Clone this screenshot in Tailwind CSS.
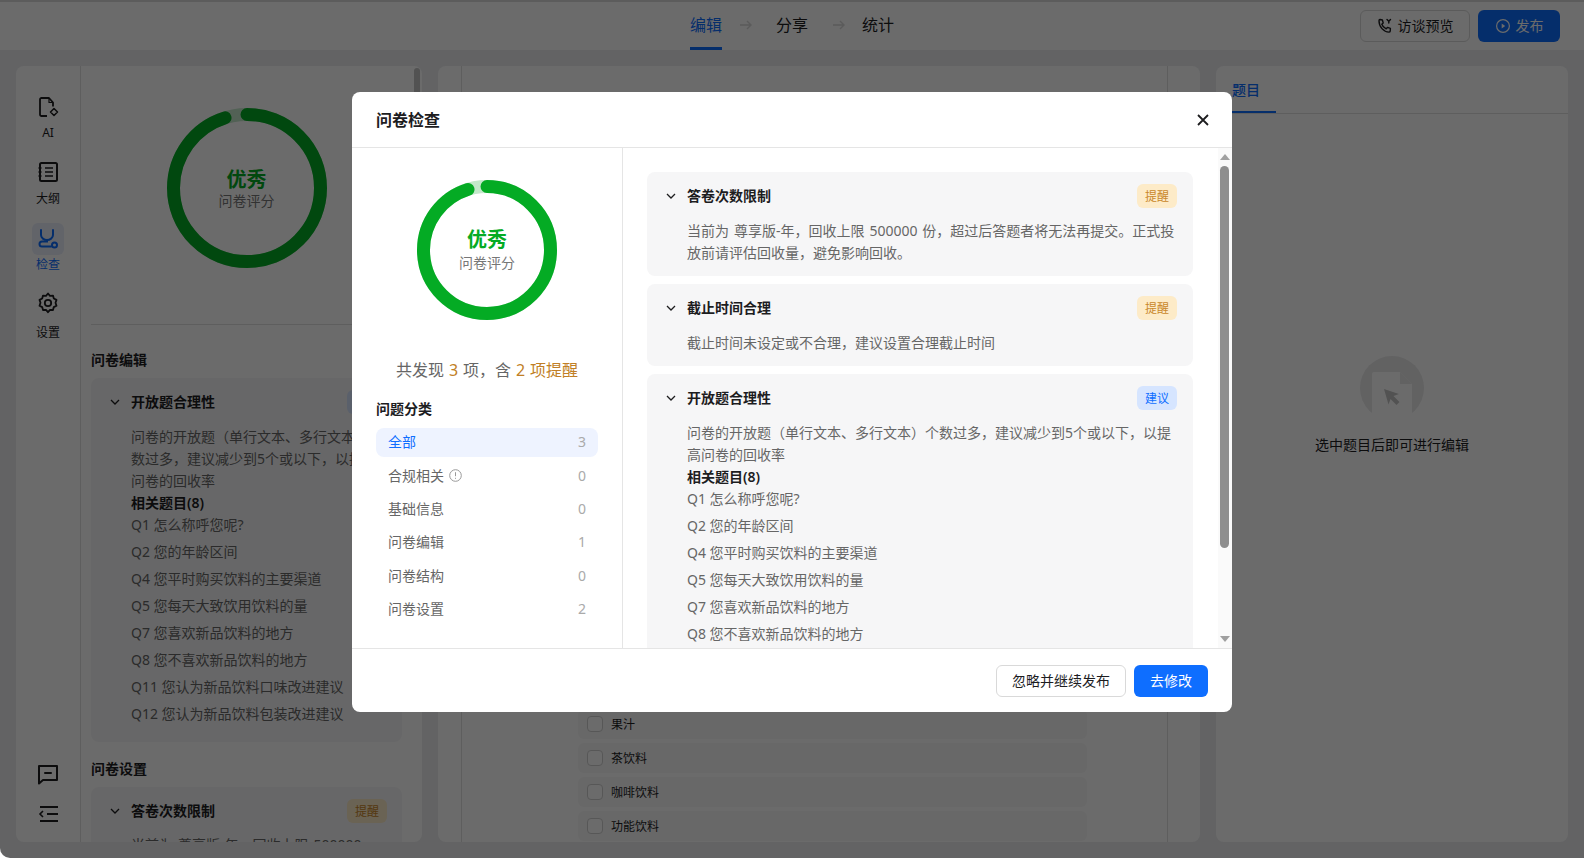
<!DOCTYPE html>
<html lang="zh-CN">
<head>
  <meta charset="UTF-8">
  <meta name="viewport" content="width=device-width, initial-scale=1.0">
  <title>问卷检查</title>
  <script src="https://cdn.jsdelivr.net/npm/@tailwindcss/browser@4"></script>
</head>
<body class="bg-white font-['Noto_Sans','Noto_Sans_CJK_SC',sans-serif] text-[#1d1d1f]">
  <div class="relative w-[1584px] h-[858px] overflow-hidden rounded-bl-[10px] bg-[#ecedef]">

    <!-- top bar -->
    <header class="relative h-[50px] bg-white border-t-2 border-[#dcdcdc] flex items-center justify-end pr-6 gap-2">
      <div class="absolute left-[690px] top-0 h-[46px] flex items-center text-base">
        <span class="relative w-8 text-[#0e6eff] h-full flex items-center">编辑<i class="absolute left-0 right-0 -bottom-[2px] h-[3px] bg-[#0e6eff]"></i></span>
        <svg class="ml-[17px] mr-[23px]" width="14" height="14" viewBox="0 0 14 14" fill="none" stroke="#d8d8d8" stroke-width="1.4"><path d="M1 7h11M8 3l4 4-4 4"/></svg>
        <span class="w-8">分享</span>
        <svg class="ml-[24px] mr-[16px]" width="14" height="14" viewBox="0 0 14 14" fill="none" stroke="#d8d8d8" stroke-width="1.4"><path d="M1 7h11M8 3l4 4-4 4"/></svg>
        <span class="w-8">统计</span>
      </div>
      <button class="h-8 w-[110px] rounded-md border border-[#d9d9d9] flex items-center justify-center gap-[5px] text-sm">
        <svg width="16" height="16" viewBox="0 0 16 16" fill="none" stroke="#1d1d1f" stroke-width="1.4" stroke-linejoin="round" stroke-linecap="round"><path d="M3 1.5 5.4 2l.8 3-1.4 1.2c.7 2 2.2 3.6 4.4 4.6l1.3-1.4 2.9 1-.2 2.7c-.1.6-.6 1-1.2 1C6.600 14 2 8.800 2 2.700c0-.6.400-1.100 1-1.200Z"/><path d="M10 1.500l1.800 1.800M13.500 1.500l-1.700 1.800v1.700"/></svg>
        访谈预览
      </button>
      <button class="h-8 w-[82px] rounded-md bg-[#0e6eff] text-white flex items-center justify-center gap-[5px] text-sm">
        <svg width="16" height="16" viewBox="0 0 16 16" fill="none" stroke="#fff" stroke-width="1.2"><circle cx="8" cy="8" r="6.400"/><path d="M6.700 5.500 10.200 8l-3.500 2.500Z" fill="#fff" stroke="none"/></svg>
        发布
      </button>
    </header>

    <main class="flex gap-4 p-4 h-[808px]">
      <!-- left panel -->
      <section class="relative w-[406px] bg-white rounded-lg flex overflow-hidden">
        <nav class="w-[65px] border-r border-[#e0e0e0] flex flex-col items-center pt-[30px] pb-[17px] text-xs shrink-0">
          <svg width="22" height="22" viewBox="0 0 22 22" fill="none" stroke="#1d1d1f" stroke-width="1.800" stroke-linejoin="round"><path d="M10 20H4.500C3.700 20 3 19.300 3 18.500V3.500C3 2.700 3.700 2 4.500 2h7.500l4 4.500v4"/><path d="M12 2v4.500h4" stroke-width="1.200"/><path d="M17 12.500l3.500 3.500-3.500 3.500-3.500-3.500Z" stroke-width="1.500"/></svg>
          <span class="mt-[7px] leading-4">AI</span>
          <svg class="mt-[20px]" width="22" height="22" viewBox="0 0 22 22" fill="none" stroke="#1d1d1f" stroke-width="2" stroke-linejoin="round"><rect x="3" y="2" width="17" height="18" rx="1.500"/><path d="M8 7h8M8 11h8M8 15h8M1.500 7h3M1.500 11h3M1.500 15h3" stroke-width="1.600"/></svg>
          <span class="mt-[8px] leading-4">大纲</span>
          <div class="mt-[16px] w-8 h-8 rounded-md bg-[#e9eefb] flex items-center justify-center">
            <svg width="22" height="22" viewBox="0 0 22 22" fill="none" stroke="#0e6eff" stroke-width="2" stroke-linecap="round"><path d="M4 2v5c0 3 3 5 6 5s6-2 6-5V2"/><path d="M10 12v1.500H5a2.500 2.500 0 0 0 0 5h9"/><circle cx="17.500" cy="17" r="2.500"/></svg>
          </div>
          <span class="mt-[2px] leading-4 text-[#0e6eff]">检查</span>
          <svg class="mt-[19px]" width="22" height="22" viewBox="0 0 22 22" fill="none" stroke="#1d1d1f" stroke-width="1.800" stroke-linejoin="round"><path d="M11 1.500l2 2.300 3-.2.800 2.900 2.700 1.400-1 2.900 1 2.900-2.700 1.400-.8 2.900-3-.2-2 2.400-2-2.400-3 .2-.8-2.900-2.700-1.400 1-2.900-1-2.900 2.700-1.400.8-2.900 3 .2Z"/><circle cx="11" cy="11" r="3.200"/></svg>
          <span class="mt-[11px] leading-4">设置</span>
          <svg class="mt-auto" width="22" height="22" viewBox="0 0 22 22" fill="none" stroke="#1d1d1f" stroke-width="2" stroke-linejoin="round"><path d="M2 3h18v14H6l-4 3.500Z"/><path d="M8 10h6" stroke-linecap="round"/></svg>
          <svg class="mt-[18px]" width="22" height="22" viewBox="0 0 22 22" fill="none" stroke="#1d1d1f" stroke-width="2"><path d="M3 4h18M10 11h11M3 18h18"/><path d="M6 8l-3 3 3 3" stroke-width="1.600"/></svg>
        </nav>

        <div class="flex-1 pl-[10px] pr-[20px] pt-[42px] overflow-hidden">
          <div class="relative w-[160px] h-[160px] mx-auto">
            <svg width="160" height="160" viewBox="0 0 160 160" fill="none" stroke-width="13" class="-rotate-90">
              <circle cx="80" cy="80" r="73.500" stroke="#c3e8ca"/>
              <circle cx="80" cy="80" r="73.500" stroke="#04ab24" stroke-linecap="round" stroke-dasharray="438.700 461.800"/>
            </svg>
            <div class="absolute inset-0 flex flex-col items-center justify-center pt-[5px]">
              <span class="text-xl leading-5 font-bold text-[#04ab24]">优秀</span>
              <span class="text-sm leading-[22px] text-[#777]">问卷评分</span>
            </div>
          </div>
          <div class="mt-[56px] border-t border-[#e0e0e0]"></div>
          <h3 class="mt-[24px] text-sm leading-[22px] font-semibold">问卷编辑</h3>
          <div class="mt-[7px] w-[311px] bg-[#f6f6f7] rounded-lg pl-[40px] pr-[15px] pt-3 pb-[17px]">
            <div class="relative h-6 flex items-center justify-between">
              <svg class="absolute left-[-21px]" width="10" height="10" viewBox="0 0 10 10" fill="none" stroke="#1d1d1f" stroke-width="1.300"><path d="M1 3l4 4 4-4"/></svg>
              <span class="text-sm font-semibold">开放题合理性</span>
              <span class="w-10 h-6 pt-px rounded-md bg-[#d6e5ff] flex items-center justify-center text-xs text-[#0e6eff]">建议</span>
            </div>
            <div class="mt-[12px] w-[256px] text-sm leading-[22px] text-[#666]">
              <p>问卷的开放题（单行文本、多行文本）个数过多，建议减少到5个或以下，以提高问卷的回收率</p>
              <p class="font-semibold text-[#1d1d1f]">相关题目(8)</p>
              <ul class="flex flex-col gap-[5px] whitespace-nowrap">
                <li>Q1 怎么称呼您呢?</li>
                <li>Q2 您的年龄区间</li>
                <li>Q4 您平时购买饮料的主要渠道</li>
                <li>Q5 您每天大致饮用饮料的量</li>
                <li>Q7 您喜欢新品饮料的地方</li>
                <li>Q8 您不喜欢新品饮料的地方</li>
                <li>Q11 您认为新品饮料口味改进建议</li>
                <li>Q12 您认为新品饮料包装改进建议</li>
              </ul>
            </div>
          </div>
          <h3 class="mt-4 text-sm leading-[22px] font-semibold">问卷设置</h3>
          <div class="mt-[7px] w-[311px] bg-[#f6f6f7] rounded-t-lg pl-[40px] pr-[15px] pt-3 pb-3">
            <div class="relative h-6 flex items-center justify-between">
              <svg class="absolute left-[-21px]" width="10" height="10" viewBox="0 0 10 10" fill="none" stroke="#1d1d1f" stroke-width="1.300"><path d="M1 3l4 4 4-4"/></svg>
              <span class="text-sm font-semibold">答卷次数限制</span>
              <span class="w-10 h-6 pt-px rounded-md bg-[#fdebc8] flex items-center justify-center text-xs text-[#c9872a]">提醒</span>
            </div>
            <p class="mt-[11px] w-[256px] text-sm leading-[22px] text-[#666] [word-spacing:1.3px]">当前为 尊享版-年，回收上限 500000</p>
          </div>
        </div>
        <div class="absolute right-[2px] top-[2px] w-[6px] h-[80px] rounded-full bg-[#c4c4c4]"></div>
      </section>

      <!-- canvas -->
      <section class="flex-1 bg-white rounded-lg flex overflow-hidden">
        <div class="w-[24px] border-r border-[#e0e0e0]"></div>
        <div class="flex-1 flex flex-col justify-end items-start gap-1 pb-px pl-[116px]">
          <label class="w-[509px] h-[30px] shrink-0 rounded-md bg-[#f7f7f8] flex items-center gap-[8px] pl-[9px] text-xs"><i class="w-4 h-4 rounded border border-[#cfcfcf] bg-white"></i><span class="translate-y-px">果汁</span></label>
          <label class="w-[509px] h-[30px] shrink-0 rounded-md bg-[#f7f7f8] flex items-center gap-[8px] pl-[9px] text-xs"><i class="w-4 h-4 rounded border border-[#cfcfcf] bg-white"></i><span class="translate-y-px">茶饮料</span></label>
          <label class="w-[509px] h-[30px] shrink-0 rounded-md bg-[#f7f7f8] flex items-center gap-[8px] pl-[9px] text-xs"><i class="w-4 h-4 rounded border border-[#cfcfcf] bg-white"></i><span class="translate-y-px">咖啡饮料</span></label>
          <label class="w-[509px] h-[30px] shrink-0 rounded-md bg-[#f7f7f8] flex items-center gap-[8px] pl-[9px] text-xs"><i class="w-4 h-4 rounded border border-[#cfcfcf] bg-white"></i><span class="translate-y-px">功能饮料</span></label>
        </div>
        <div class="w-[33px] border-l border-[#e0e0e0]"></div>
      </section>

      <!-- right panel -->
      <section class="w-[352px] bg-white rounded-lg flex flex-col">
        <div class="h-[48px] border-b border-[#e0e0e0] flex">
          <span class="relative w-[60px] h-[47px] flex items-center justify-center text-sm text-[#0e6eff] font-medium">题目<i class="absolute left-0 right-0 bottom-0 h-[2px] bg-[#0e6eff]"></i></span>
        </div>
        <div class="flex flex-col items-center pt-[242px]">
          <svg width="64" height="64" viewBox="0 0 64 64">
            <circle cx="32" cy="32" r="32" fill="#e9e9ea"/>
            <path d="M12 18a2 2 0 0 1 2-2h26l12 12v30a32 32 0 0 1-40 0Z" fill="#fff"/>
            <path d="M40 16l12 12H40Z" fill="#e9e9ea"/>
            <path d="M24 33l15 5-5.500 2 6 6-3 3-6-6-2 5.500Z" fill="#c4c4c4"/>
          </svg>
          <p class="mt-[14px] text-sm leading-[22px]">选中题目后即可进行编辑</p>
        </div>
      </section>
    </main>

    <!-- overlay -->
    <div class="absolute inset-0 bg-black/58"></div>

    <!-- dialog -->
    <div class="absolute left-[352px] top-[92px] w-[880px] h-[620px] bg-white rounded-lg flex flex-col overflow-hidden">
      <div class="h-[56px] shrink-0 border-b border-[#e5e5e5] flex items-center justify-between pl-6 pr-[22px]">
        <h2 class="text-base font-semibold">问卷检查</h2>
        <svg width="14" height="14" viewBox="0 0 14 14" fill="none" stroke="#1d1d1f" stroke-width="1.800"><path d="M2 2l10 10M12 2 2 12"/></svg>
      </div>

      <div class="flex-1 flex min-h-0">
        <aside class="w-[271px] shrink-0 border-r border-[#e5e5e5] px-6 pt-8">
          <div class="relative w-[140px] h-[140px] mx-auto">
            <svg width="140" height="140" viewBox="0 0 140 140" fill="none" stroke-width="13" class="-rotate-90">
              <circle cx="70" cy="70" r="63.500" stroke="#c3e8ca"/>
              <circle cx="70" cy="70" r="63.500" stroke="#04ab24" stroke-linecap="round" stroke-dasharray="379 399"/>
            </svg>
            <div class="absolute inset-0 flex flex-col items-center justify-center pt-[3px]">
              <span class="text-xl leading-[22px] font-bold text-[#04ab24]">优秀</span>
              <span class="mt-px text-sm leading-[22px] text-[#777]">问卷评分</span>
            </div>
          </div>
          <p class="mt-[38px] text-base leading-6 text-center text-[#666] [word-spacing:0.8px]">共发现 <span class="text-[#c17f26]">3</span> 项，含 <span class="text-[#c17f26]">2 项提醒</span></p>
          <h3 class="mt-4 text-sm leading-[22px] font-semibold">问题分类</h3>
          <ul class="mt-[7.500px] flex flex-col gap-1 text-sm text-[#666]">
            <li class="h-[29.400px] rounded-lg bg-[#eef3ff] px-3 flex items-center justify-between text-[#0e6eff]">全部<span class="text-[#aaa]">3</span></li>
            <li class="h-[29.400px] px-3 flex items-center justify-between">
              <span class="flex items-center gap-[5px]">合规相关
                <svg width="13" height="13" viewBox="0 0 13 13" fill="none" stroke="#999"><circle cx="6.500" cy="6.500" r="5.800"/><path d="M6.500 3.200v4M6.500 8.800v1"/></svg>
              </span>
              <span class="text-[#aaa]">0</span>
            </li>
            <li class="h-[29.400px] px-3 flex items-center justify-between">基础信息<span class="text-[#aaa]">0</span></li>
            <li class="h-[29.400px] px-3 flex items-center justify-between">问卷编辑<span class="text-[#aaa]">1</span></li>
            <li class="h-[29.400px] px-3 flex items-center justify-between">问卷结构<span class="text-[#aaa]">0</span></li>
            <li class="h-[29.400px] px-3 flex items-center justify-between">问卷设置<span class="text-[#aaa]">2</span></li>
          </ul>
        </aside>

        <div class="flex-1 min-w-0 overflow-hidden pl-6 pr-[25px] pt-6 flex flex-col gap-2">
          <article class="shrink-0 bg-[#f6f6f7] rounded-lg pl-[40px] pr-4 py-3">
            <div class="relative h-6 flex items-center justify-between">
              <svg class="absolute left-[-21px]" width="10" height="10" viewBox="0 0 10 10" fill="none" stroke="#1d1d1f" stroke-width="1.300"><path d="M1 3l4 4 4-4"/></svg>
              <span class="text-sm font-semibold">答卷次数限制</span>
              <span class="w-10 h-6 pt-px rounded-md bg-[#fdebc8] flex items-center justify-center text-xs text-[#c9872a]">提醒</span>
            </div>
            <p class="mt-3 text-sm leading-[22px] text-[#666] [word-spacing:1.300px]">当前为 尊享版-年，回收上限 500000 份，超过后答题者将无法再提交。正式投放前请评估回收量，避免影响回收。</p>
          </article>
          <article class="shrink-0 bg-[#f6f6f7] rounded-lg pl-[40px] pr-4 py-3">
            <div class="relative h-6 flex items-center justify-between">
              <svg class="absolute left-[-21px]" width="10" height="10" viewBox="0 0 10 10" fill="none" stroke="#1d1d1f" stroke-width="1.300"><path d="M1 3l4 4 4-4"/></svg>
              <span class="text-sm font-semibold">截止时间合理</span>
              <span class="w-10 h-6 pt-px rounded-md bg-[#fdebc8] flex items-center justify-center text-xs text-[#c9872a]">提醒</span>
            </div>
            <p class="mt-3 text-sm leading-[22px] text-[#666]">截止时间未设定或不合理，建议设置合理截止时间</p>
          </article>
          <article class="shrink-0 bg-[#f6f6f7] rounded-lg pl-[40px] pr-4 py-3">
            <div class="relative h-6 flex items-center justify-between">
              <svg class="absolute left-[-21px]" width="10" height="10" viewBox="0 0 10 10" fill="none" stroke="#1d1d1f" stroke-width="1.300"><path d="M1 3l4 4 4-4"/></svg>
              <span class="text-sm font-semibold">开放题合理性</span>
              <span class="w-10 h-6 pt-px rounded-md bg-[#d6e5ff] flex items-center justify-center text-xs text-[#0e6eff]">建议</span>
            </div>
            <div class="mt-3 text-sm leading-[22px] text-[#666]">
              <p>问卷的开放题（单行文本、多行文本）个数过多，建议减少到5个或以下，以提高问卷的回收率</p>
              <p class="font-semibold text-[#1d1d1f]">相关题目(8)</p>
              <ul class="flex flex-col gap-[5px]">
                <li>Q1 怎么称呼您呢?</li>
                <li>Q2 您的年龄区间</li>
                <li>Q4 您平时购买饮料的主要渠道</li>
                <li>Q5 您每天大致饮用饮料的量</li>
                <li>Q7 您喜欢新品饮料的地方</li>
                <li>Q8 您不喜欢新品饮料的地方</li>
              </ul>
            </div>
          </article>
        </div>

        <!-- scrollbar -->
        <div class="w-[14px] shrink-0 flex flex-col items-center bg-[#fafafa] pt-[6px] pb-[6px] pr-px">
          <i class="w-0 h-0 border-x-[5px] border-x-transparent border-b-[6px] border-b-[#a0a0a0]"></i>
          <i class="mt-[6px] w-[9px] h-[382px] rounded-full bg-[#8e8e8e]"></i>
          <i class="mt-auto w-0 h-0 border-x-[5px] border-x-transparent border-t-[6px] border-t-[#a0a0a0]"></i>
        </div>
      </div>

      <div class="h-[64px] shrink-0 border-t border-[#e5e5e5] flex items-center justify-end gap-2 pr-6">
        <button class="h-8 w-[130px] rounded-md border border-[#d9d9d9] text-sm">忽略并继续发布</button>
        <button class="h-8 w-[74px] rounded-md bg-[#0e6eff] text-white text-sm">去修改</button>
      </div>
    </div>
  </div>
</body>
</html>
